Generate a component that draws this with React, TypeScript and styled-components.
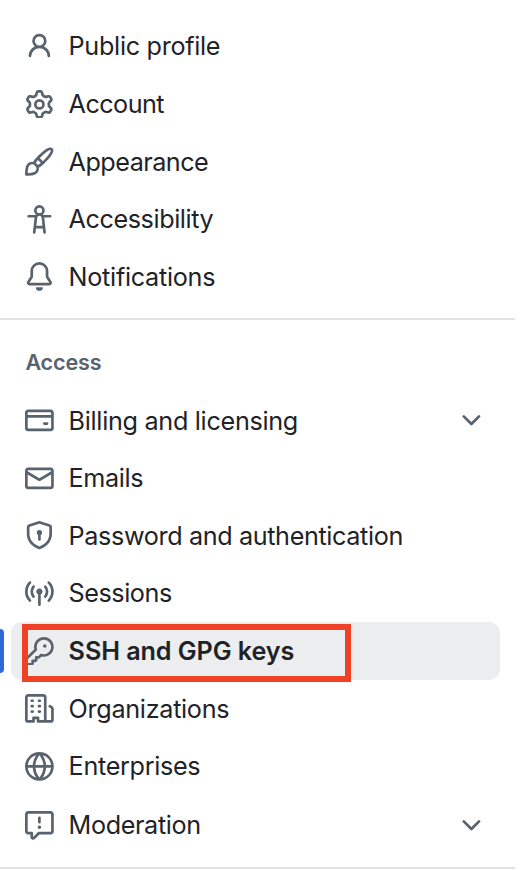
import React from 'react';
import styled, { createGlobalStyle } from 'styled-components';

const GlobalStyle = createGlobalStyle`
  *, *::before, *::after { box-sizing: border-box; }
  html, body { margin: 0; background: #ffffff; }
  body { height: 870px; overflow: hidden; }
`;

const Sidebar = styled.nav`
  width: 515px;
  height: 870px;
  padding-top: 17.6px;
  overflow: hidden;
  background: #ffffff;
  color: #1f2328;
  font-family: Inter, 'Liberation Sans', sans-serif;
  font-size: 25.2px;
`;

const List = styled.ul`
  list-style: none;
  margin: 0;
  padding: 0 15px 0 11px;
`;

const Row = styled.li<{ $active?: boolean; $offset?: number }>`
  position: relative;
  display: flex;
  align-items: center;
  height: 57.6px;
  margin-top: ${(p) => p.$offset ?? 0}px;
  padding: 0 14.4px;
  gap: 14.4px;
  border-radius: 11px;
  background: ${(p) => (p.$active ? '#ebedef' : 'transparent')};
`;

const Label = styled.span<{ $spacing: number; $strong?: boolean }>`
  flex: 1;
  white-space: nowrap;
  line-height: 36px;
  font-weight: ${(p) => (p.$strong ? 600 : 400)};
  letter-spacing: ${(p) => p.$spacing}px;
`;

const Icon = styled.svg`
  flex: none;
  width: 28.8px;
  height: 28.8px;
  fill: #59636e;
`;

const Divider = styled.hr`
  height: 2px;
  margin: 12.8px 0 0;
  border: 0;
  background: #dfe3e8;
`;

const Heading = styled.h3`
  margin: 23.6px 0 0;
  padding-left: 25.4px;
  height: 47.9px;
  line-height: 36px;
  font-size: 21.6px;
  font-weight: 600;
  letter-spacing: -0.15px;
  color: #59636e;
`;

const ActiveBar = styled.span`
  position: absolute;
  left: -15px;
  top: 6.5px;
  width: 8px;
  height: 44px;
  border-radius: 4px;
  background: #2f68d8;
`;

const HighlightBox = styled.span`
  position: absolute;
  left: 11px;
  top: 2px;
  width: 329px;
  height: 58px;
  border: 6px solid #ee4126;
`;

const paths = {
  person:
    'M10.561 8.073a6.005 6.005 0 0 1 3.432 5.142.75.75 0 1 1-1.498.07 4.5 4.5 0 0 0-8.99 0 .75.75 0 0 1-1.498-.07 6.004 6.004 0 0 1 3.431-5.142 3.999 3.999 0 1 1 5.123 0ZM10.5 5a2.5 2.5 0 1 0-5 0 2.5 2.5 0 0 0 5 0Z',
  gear:
    'M8 0a8.2 8.2 0 0 1 .701.031C9.444.095 9.99.645 10.16 1.29l.288 1.107c.018.066.079.158.212.224.231.114.454.243.668.386.123.082.233.09.299.071l1.103-.303c.644-.176 1.392.021 1.82.63.27.385.506.792.704 1.218.315.675.111 1.422-.364 1.891l-.814.806c-.049.048-.098.147-.088.294.016.257.016.515 0 .772-.01.147.038.246.088.294l.814.806c.475.469.679 1.216.364 1.891a7.977 7.977 0 0 1-.704 1.217c-.428.61-1.176.807-1.82.63l-1.102-.302c-.067-.019-.177-.011-.3.071a5.909 5.909 0 0 1-.668.386c-.133.066-.194.158-.211.224l-.29 1.106c-.168.646-.715 1.196-1.458 1.26a8.006 8.006 0 0 1-1.402 0c-.743-.064-1.289-.614-1.458-1.26l-.289-1.106c-.018-.066-.079-.158-.212-.224a5.738 5.738 0 0 1-.668-.386c-.123-.082-.233-.09-.299-.071l-1.103.303c-.644.176-1.392-.021-1.82-.63a8.12 8.12 0 0 1-.704-1.218c-.315-.675-.111-1.422.363-1.891l.815-.806c.05-.048.098-.147.088-.294a6.214 6.214 0 0 1 0-.772c.01-.147-.038-.246-.088-.294l-.815-.806C.635 6.045.431 5.298.746 4.623a7.92 7.92 0 0 1 .704-1.217c.428-.61 1.176-.807 1.82-.63l1.102.302c.067.019.177.011.3-.071.214-.143.437-.272.668-.386.133-.066.194-.158.211-.224l.29-1.106C6.009.645 6.556.095 7.299.03 7.53.01 7.764 0 8 0Zm-.571 1.525c-.036.003-.108.036-.137.146l-.289 1.105c-.147.561-.549.967-.998 1.189-.173.086-.34.183-.5.29-.417.278-.97.423-1.529.27l-1.103-.303c-.109-.03-.175.016-.195.045-.22.312-.412.644-.573.99-.014.031-.021.11.059.19l.815.806c.411.406.562.957.53 1.456a4.709 4.709 0 0 0 0 .582c.032.499-.119 1.05-.53 1.456l-.815.806c-.081.08-.073.159-.059.19.162.346.353.677.573.989.02.03.085.076.195.046l1.102-.303c.56-.153 1.113-.008 1.53.27.161.107.328.204.501.29.447.222.85.629.997 1.189l.289 1.105c.029.109.101.143.137.146a6.6 6.6 0 0 0 1.142 0c.036-.003.108-.036.137-.146l.289-1.105c.147-.561.549-.967.998-1.189.173-.086.34-.183.5-.29.417-.278.97-.423 1.529-.27l1.103.303c.109.029.175-.016.195-.045.22-.313.411-.644.573-.99.014-.031.021-.11-.059-.19l-.815-.806c-.411-.406-.562-.957-.53-1.456a4.709 4.709 0 0 0 0-.582c-.032-.499.119-1.05.53-1.456l.815-.806c.081-.08.073-.159.059-.19a6.464 6.464 0 0 0-.573-.989c-.02-.03-.085-.076-.195-.046l-1.102.303c-.56.153-1.113.008-1.53-.27a4.44 4.44 0 0 0-.501-.29c-.447-.222-.85-.629-.997-1.189l-.289-1.105c-.029-.11-.101-.143-.137-.146a6.6 6.6 0 0 0-1.142 0ZM11 8a3 3 0 1 1-6 0 3 3 0 0 1 6 0ZM9.5 8a1.5 1.5 0 1 0-3.001.001A1.5 1.5 0 0 0 9.5 8Z',
  brush:
    'M11.134 1.535c.7-.509 1.416-.942 2.076-1.155.649-.21 1.463-.267 2.069.34.603.601.568 1.411.368 2.07-.202.668-.624 1.39-1.125 2.096-1.011 1.424-2.496 2.987-3.775 4.249-1.098 1.084-2.132 1.839-3.04 2.3a3.744 3.744 0 0 1-1.055 3.217c-.431.431-1.065.691-1.657.861-.614.177-1.294.287-1.914.357A21.151 21.151 0 0 1 .797 16H.743l.007-.75H.749L.742 16a.75.75 0 0 1-.743-.742l.743-.008-.742.007v-.054a21.25 21.25 0 0 1 .13-2.284c.067-.647.187-1.287.358-1.914.17-.591.43-1.226.86-1.657a3.746 3.746 0 0 1 3.227-1.054c.466-.893 1.225-1.907 2.314-2.982 1.271-1.255 2.833-2.75 4.245-3.777ZM1.62 13.089c-.051.464-.086.929-.104 1.395.466-.018.932-.053 1.396-.104a10.511 10.511 0 0 0 1.668-.309c.526-.151.856-.325 1.011-.48a2.25 2.25 0 1 0-3.182-3.182c-.155.155-.329.485-.48 1.01a10.515 10.515 0 0 0-.309 1.67Zm10.396-10.34c-1.224.89-2.605 2.189-3.822 3.384l1.718 1.718c1.21-1.205 2.51-2.597 3.387-3.833.47-.662.78-1.227.912-1.662.134-.444.032-.551.009-.575h-.001V1.78c-.014-.014-.113-.113-.548.027-.432.14-.995.462-1.655.942Zm-4.832 7.266-.001.001a9.859 9.859 0 0 0 1.63-1.142L7.155 7.216a9.7 9.7 0 0 0-1.161 1.607c.482.302.889.71 1.19 1.192Z',
  accessibility:
    'M9.923 5.302c.063.063.122.129.178.198H14A.75.75 0 0 1 14 7h-3.3l.578 5.163.362 2.997a.75.75 0 0 1-1.49.18L9.868 13H6.132l-.282 2.34a.75.75 0 0 1-1.49-.18l.362-2.997L5.3 7H2a.75.75 0 0 1 0-1.5h3.9a2.54 2.54 0 0 1 .176-.198 3 3 0 1 1 3.847 0ZM9.2 7.073h-.001a1.206 1.206 0 0 0-2.398 0L6.305 11.5h3.39ZM9.5 3a1.5 1.5 0 1 0-3.001.001A1.5 1.5 0 0 0 9.5 3Z',
  bell:
    'M8 16a2 2 0 0 0 1.985-1.75c.017-.137-.097-.25-.235-.25h-3.5c-.138 0-.252.113-.235.25A2 2 0 0 0 8 16ZM3 5a5 5 0 0 1 10 0v2.947c0 .05.015.098.042.139l1.703 2.555A1.519 1.519 0 0 1 13.482 13H2.518a1.516 1.516 0 0 1-1.263-2.36l1.703-2.554A.255.255 0 0 0 3 7.947Zm5-3.5A3.5 3.5 0 0 0 4.5 5v2.947c0 .346-.102.683-.294.97l-1.703 2.556a.017.017 0 0 0-.003.01l.001.006c0 .002.002.004.004.006l.006.004.007.001h10.964l.007-.001.006-.004.004-.006.001-.007a.017.017 0 0 0-.003-.01l-1.703-2.554a1.745 1.745 0 0 1-.294-.97V5A3.5 3.5 0 0 0 8 1.5Z',
  card:
    'M10.75 9a.75.75 0 0 0 0 1.5h1.5a.75.75 0 0 0 0-1.5h-1.5ZM0 3.75C0 2.784.784 2 1.75 2h12.5c.966 0 1.75.784 1.75 1.75v8.5A1.75 1.75 0 0 1 14.25 14H1.75A1.75 1.75 0 0 1 0 12.25ZM14.5 6.5h-13v5.75c0 .138.112.25.25.25h12.5a.25.25 0 0 0 .25-.25Zm0-2.75a.25.25 0 0 0-.25-.25H1.75a.25.25 0 0 0-.25.25V5h13Z',
  mail:
    'M1.75 2h12.5c.966 0 1.75.784 1.75 1.75v8.5A1.75 1.75 0 0 1 14.25 14H1.75A1.75 1.75 0 0 1 0 12.25v-8.5C0 2.784.784 2 1.75 2ZM1.5 12.251c0 .138.112.25.25.25h12.5a.25.25 0 0 0 .25-.25V5.809L8.38 9.397a.75.75 0 0 1-.76 0L1.5 5.809v6.442Zm13-8.181v-.32a.25.25 0 0 0-.25-.25H1.75a.25.25 0 0 0-.25.25v.32L8 7.88Z',
  shield:
    'm8.533.133 5.25 1.68A1.75 1.75 0 0 1 15 3.48V7c0 1.566-.32 3.182-1.303 4.682-.983 1.498-2.585 2.813-5.032 3.855a1.697 1.697 0 0 1-1.33 0c-2.447-1.042-4.049-2.357-5.032-3.855C1.32 10.182 1 8.566 1 7V3.48a1.75 1.75 0 0 1 1.217-1.667l5.25-1.68a1.748 1.748 0 0 1 1.066 0Zm-.61 1.429.001.001-5.25 1.68a.251.251 0 0 0-.174.237V7c0 1.36.275 2.666 1.057 3.859.784 1.194 2.121 2.342 4.366 3.298a.196.196 0 0 0 .154 0c2.245-.957 3.582-2.103 4.366-3.297C13.225 9.666 13.5 8.358 13.5 7V3.48a.25.25 0 0 0-.174-.238l-5.25-1.68a.25.25 0 0 0-.153 0ZM9.5 6.5c0 .536-.286 1.032-.75 1.3v2.45a.75.75 0 0 1-1.5 0V7.8A1.5 1.5 0 1 1 9.5 6.5Z',
  broadcast:
    'M8.75 8.582v5.668a.75.75 0 0 1-1.5 0V8.582a1.75 1.75 0 1 1 1.5 0Zm3.983-7.125a.75.75 0 0 1 1.06.026A7.976 7.976 0 0 1 16 7c0 2.139-.84 4.083-2.207 5.517a.75.75 0 1 1-1.086-1.034A6.474 6.474 0 0 0 14.5 7a6.474 6.474 0 0 0-1.793-4.483.75.75 0 0 1 .026-1.06Zm-9.466 0c.3.286.312.76.026 1.06A6.474 6.474 0 0 0 1.5 7a6.47 6.47 0 0 0 1.793 4.483.75.75 0 0 1-1.086 1.034A7.973 7.973 0 0 1 0 7c0-2.139.84-4.083 2.207-5.517a.75.75 0 0 1 1.06-.026Zm8.556 2.321A4.988 4.988 0 0 1 13 7a4.988 4.988 0 0 1-1.177 3.222.75.75 0 1 1-1.146-.967A3.487 3.487 0 0 0 11.5 7c0-.86-.309-1.645-.823-2.255a.75.75 0 0 1 1.146-.967Zm-6.492.958A3.48 3.48 0 0 0 4.5 7a3.48 3.48 0 0 0 .823 2.255.75.75 0 0 1-1.146.967A4.981 4.981 0 0 1 3 7a4.982 4.982 0 0 1 1.188-3.236.75.75 0 1 1 1.143.972Z',
  key:
    'M10.5 0a5.499 5.499 0 1 1-1.288 10.848l-.932.932a.749.749 0 0 1-.53.22H7v.75a.749.749 0 0 1-.22.53l-.5.5a.749.749 0 0 1-.53.22H5v.75a.749.749 0 0 1-.22.53l-.5.5a.749.749 0 0 1-.53.22h-2A1.75 1.75 0 0 1 0 14.25v-2c0-.199.079-.389.22-.53l4.932-4.932A5.5 5.5 0 0 1 10.5 0Zm-4 5.5c-.001.431.069.86.205 1.269a.75.75 0 0 1-.181.768L1.5 12.56v1.69c0 .138.112.25.25.25h1.69l.06-.06v-1.19a.75.75 0 0 1 .75-.75h1.19l.06-.06v-1.19a.75.75 0 0 1 .75-.75h1.19l1.023-1.025a.75.75 0 0 1 .768-.18A4 4 0 1 0 6.5 5.5ZM11 6a1 1 0 1 1 0-2 1 1 0 0 1 0 2Z',
  organization:
    'M1.75 16A1.75 1.75 0 0 1 0 14.25V1.75C0 .784.784 0 1.75 0h8.5C11.216 0 12 .784 12 1.75v12.5c0 .085-.006.168-.018.25h2.268a.25.25 0 0 0 .25-.25V8.285a.25.25 0 0 0-.111-.208l-1.055-.703a.749.749 0 1 1 .832-1.248l1.055.703c.487.325.779.871.779 1.456v5.965A1.75 1.75 0 0 1 14.25 16h-3.5a.766.766 0 0 1-.197-.026c-.099.017-.2.026-.303.026h-3a.75.75 0 0 1-.75-.75V14h-1v1.25a.75.75 0 0 1-.75.75Zm-.25-1.75c0 .138.112.25.25.25H4v-1.25a.75.75 0 0 1 .75-.75h2.5a.75.75 0 0 1 .75.75v1.25h2.25a.25.25 0 0 0 .25-.25V1.75a.25.25 0 0 0-.25-.25h-8.5a.25.25 0 0 0-.25.25ZM3.75 6h.5a.75.75 0 0 1 0 1.5h-.5a.75.75 0 0 1 0-1.5ZM3 3.75A.75.75 0 0 1 3.75 3h.5a.75.75 0 0 1 0 1.5h-.5A.75.75 0 0 1 3 3.75Zm4 3A.75.75 0 0 1 7.75 6h.5a.75.75 0 0 1 0 1.5h-.5A.75.75 0 0 1 7 6.75ZM7.75 3h.5a.75.75 0 0 1 0 1.5h-.5a.75.75 0 0 1 0-1.5ZM3 9.75A.75.75 0 0 1 3.75 9h.5a.75.75 0 0 1 0 1.5h-.5A.75.75 0 0 1 3 9.75ZM7.75 9h.5a.75.75 0 0 1 0 1.5h-.5a.75.75 0 0 1 0-1.5Z',
  globe:
    'M8 0a8 8 0 1 1 0 16A8 8 0 0 1 8 0ZM5.78 8.75a9.64 9.64 0 0 0 1.363 4.177c.255.426.542.832.857 1.215.245-.296.551-.705.857-1.215A9.64 9.64 0 0 0 10.22 8.75Zm4.44-1.5a9.64 9.64 0 0 0-1.363-4.177c-.307-.51-.612-.919-.857-1.215a9.927 9.927 0 0 0-.857 1.215A9.64 9.64 0 0 0 5.78 7.25Zm-5.944 1.5H1.543a6.507 6.507 0 0 0 4.666 5.5c-.123-.181-.24-.365-.352-.552-.715-1.192-1.437-2.874-1.581-4.948Zm-2.733-1.5h2.733c.144-2.074.866-3.756 1.58-4.948.12-.197.237-.381.353-.552a6.507 6.507 0 0 0-4.666 5.5Zm10.181 1.5c-.144 2.074-.866 3.756-1.58 4.948-.12.197-.237.381-.353.552a6.507 6.507 0 0 0 4.666-5.5Zm2.733-1.5a6.507 6.507 0 0 0-4.666-5.5c.123.181.24.365.353.552.714 1.192 1.436 2.874 1.58 4.948Z',
  report:
    'M0 1.75C0 .784.784 0 1.75 0h12.5C15.216 0 16 .784 16 1.75v9.5A1.75 1.75 0 0 1 14.25 13H8.06l-2.573 2.573A1.458 1.458 0 0 1 3 14.543V13H1.75A1.75 1.75 0 0 1 0 11.25Zm1.75-.25a.25.25 0 0 0-.25.25v9.5c0 .138.112.25.25.25h2a.75.75 0 0 1 .75.75v2.19l2.72-2.72a.749.749 0 0 1 .53-.22h6.5a.25.25 0 0 0 .25-.25v-9.5a.25.25 0 0 0-.25-.25Zm7 2.25v2.5a.75.75 0 0 1-1.5 0v-2.5a.75.75 0 0 1 1.5 0ZM9 9a1 1 0 1 1-2 0 1 1 0 0 1 2 0Z',
  chevron:
    'M12.78 5.22a.749.749 0 0 1 0 1.06l-4.25 4.25a.749.749 0 0 1-1.06 0L3.22 6.28a.749.749 0 1 1 1.06-1.06L8 8.939l3.72-3.719a.749.749 0 0 1 1.06 0Z',
};

type IconName = keyof typeof paths;

interface Item {
  icon: IconName;
  label: string;
  spacing: number;
  expandable?: boolean;
  active?: boolean;
  offset?: number;
}

const profileItems: Item[] = [
  { icon: 'person', label: 'Public profile', spacing: -0.3 },
  { icon: 'gear', label: 'Account', spacing: -0.55 },
  { icon: 'brush', label: 'Appearance', spacing: -0.52 },
  { icon: 'accessibility', label: 'Accessibility', spacing: -0.42 },
  { icon: 'bell', label: 'Notifications', spacing: -0.28 },
];

const accessItems: Item[] = [
  { icon: 'card', label: 'Billing and licensing', spacing: -0.3, expandable: true },
  { icon: 'mail', label: 'Emails', spacing: -0.35 },
  { icon: 'shield', label: 'Password and authentication', spacing: -0.37 },
  { icon: 'broadcast', label: 'Sessions', spacing: -0.46 },
  { icon: 'key', label: 'SSH and GPG keys', spacing: -0.08, active: true },
  { icon: 'organization', label: 'Organizations', spacing: -0.3 },
  { icon: 'globe', label: 'Enterprises', spacing: -0.32 },
  { icon: 'report', label: 'Moderation', spacing: -0.38, expandable: true, offset: 1.7 },
];

const Glyph = ({ name }: { name: IconName }) => (
  <Icon viewBox="0 0 16 16" aria-hidden="true">
    <path d={paths[name]} />
  </Icon>
);

const NavItem = ({ item }: { item: Item }) => (
  <Row $active={item.active} $offset={item.offset}>
    {item.active && <ActiveBar />}
    <Glyph name={item.icon} />
    <Label $strong={item.active} $spacing={item.spacing}>
      {item.label}
    </Label>
    {item.expandable && <Glyph name="chevron" />}
    {item.active && <HighlightBox />}
  </Row>
);

export default function App() {
  return (
    <>
      <GlobalStyle />
      <Sidebar>
        <List>
          {profileItems.map((item) => (
            <NavItem key={item.label} item={item} />
          ))}
        </List>
        <Divider />
        <Heading>Access</Heading>
        <List>
          {accessItems.map((item) => (
            <NavItem key={item.label} item={item} />
          ))}
        </List>
        <Divider />
      </Sidebar>
    </>
  );
}
